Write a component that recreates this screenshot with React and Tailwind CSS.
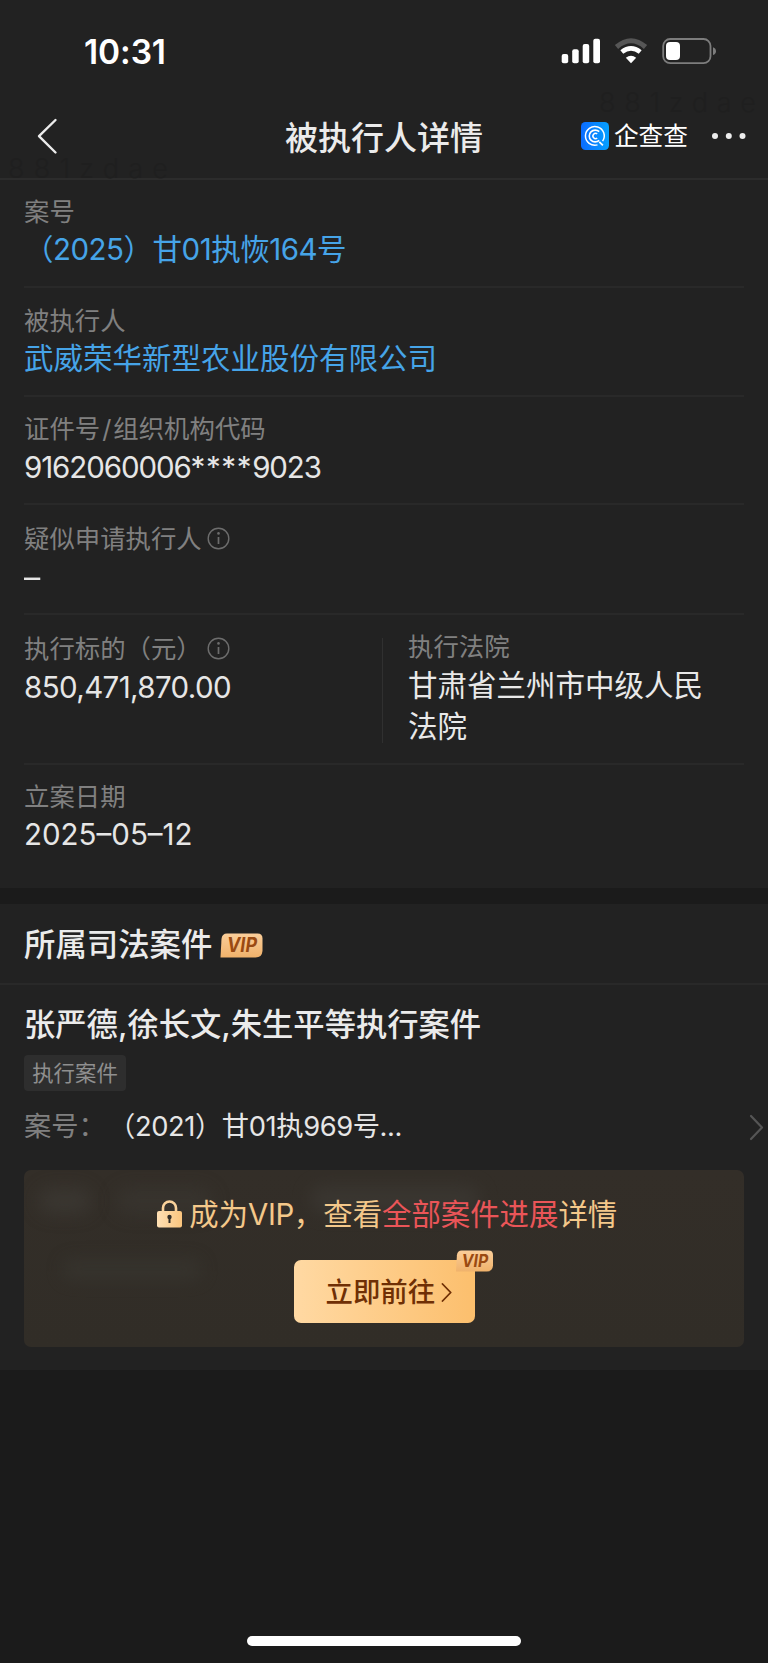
import React from "react";

const InfoIcon = () => (
  <svg className="size-[23px] shrink-0" viewBox="0 0 23 23" fill="none">
    <circle cx="11.5" cy="11.5" r="10.3" stroke="#6d6d6d" strokeWidth="1.4" />
    <path d="M11.5 10v7" stroke="#6d6d6d" strokeWidth="1.7" />
    <circle cx="11.5" cy="6.4" r="1.3" fill="#6d6d6d" />
  </svg>
);

const Label = ({ children, className = "" }) => (
  <div className={`flex h-[35px] items-center text-[25.4px] leading-[35px] whitespace-nowrap text-[#808080] ${className}`}>
    {children}
  </div>
);

const Value = ({ children, className = "text-[#e9e9e9]" }) => (
  <div className={`text-[29.5px] leading-[41px] ${className}`}>{children}</div>
);

const VipBadge = ({ className, id }) => (
  <svg className={className} viewBox="0 0 43 25">
    <defs>
      <linearGradient id={id} x1="0" y1="0" x2="0" y2="1">
        <stop offset="0" stopColor="#fbce9a" />
        <stop offset="1" stopColor="#f0b26b" />
      </linearGradient>
    </defs>
    <path d="M7 .5H37.5Q42.5 .5 42.5 5.5V18Q42 24.5 35.5 24.5H.5L1.5 6Q2 .5 7 .5Z" fill={`url(#${id})`} />
    <text x="22" y="19.2" textAnchor="middle" textLength="30" lengthAdjust="spacingAndGlyphs" fontFamily="Inter, sans-serif" fontWeight="700" fontStyle="italic" fontSize="19.5" fill="#9a4a12">
      VIP
    </text>
  </svg>
);

const StatusBar = () => (
  <div className="flex h-[100px] items-start justify-between pt-[32px] pr-[51px] pl-[84px]">
    <div className="text-[33.5px] leading-[40px] font-semibold tracking-[-0.1px] text-white">10:31</div>
    <svg className="mt-[4px] h-[30px] w-[157px]" viewBox="560 36 157 30" fill="none">
      <g fill="#fff">
        <rect x="561.7" y="54" width="6.5" height="9.2" rx="2" />
        <rect x="572.2" y="49.3" width="6.5" height="13.9" rx="2" />
        <rect x="582.7" y="44" width="6.5" height="19.2" rx="2" />
        <rect x="593.3" y="38.8" width="6.7" height="24.4" rx="2" />
      </g>
      <path d="M616.5 47Q631 34.5 645.5 47" stroke="#565656" strokeWidth="5" />
      <path d="M621.8 52Q631 44.8 640.2 52" stroke="#fff" strokeWidth="4.7" />
      <path d="M625.8 57.8Q631 53.6 636.2 57.8L631 63.2Z" fill="#fff" />
      <rect x="663.2" y="39" width="47.3" height="24.2" rx="7" stroke="#7d7d7d" strokeWidth="1.8" />
      <path d="M713 47.3Q716 48.5 716 51.2Q716 54 713 55Z" fill="#7d7d7d" />
      <rect x="666" y="42" width="14" height="18" rx="4" fill="#fff" />
    </svg>
  </div>
);

const NavBar = () => (
  <div className="grid h-[80px] grid-cols-[1fr_200px_1fr] items-start border-b-2 border-[#2c2c2c]">
    <svg className="mt-[17px] ml-[36px] h-[38px] w-[24px]" viewBox="0 0 24 38" fill="none">
      <path d="M19.5 3 3 19.2 19.5 35.5" stroke="#ececec" strokeWidth="2.4" strokeLinecap="round" strokeLinejoin="round" />
    </svg>
    <div className="mt-[14px] text-center text-[33px] leading-[48px] font-medium whitespace-nowrap text-[#ebebeb]">被执行人详情</div>
    <div className="mt-[22px] flex items-center justify-end pr-[21px]">
      <svg className="size-[28px]" viewBox="0 0 28 28" fill="none">
        <defs>
          <linearGradient id="logo" x1="0" y1="0" x2="1" y2="0">
            <stop offset="0" stopColor="#0b6cff" />
            <stop offset="1" stopColor="#05a0ff" />
          </linearGradient>
        </defs>
        <rect width="28" height="28" rx="4.5" fill="url(#logo)" />
        <g stroke="#fff">
          <path d="M16.5 22.9A9.4 9.4 0 1 1 21.6 19.2" strokeWidth="1.5" />
          <path d="M18.3 19.8 21.9 23.4" strokeWidth="1.7" />
          <path d="M18.2 9.7A5.9 5.9 0 1 0 18.2 18.3" strokeWidth="1.6" />
          <path d="M16.2 11.8A2.7 2.7 0 1 0 16.2 16.2" strokeWidth="1.5" />
        </g>
      </svg>
      <div className="ml-[5px] text-[24.7px] leading-[28px] font-normal whitespace-nowrap text-white">企查查</div>
      <svg className="ml-[23px] h-[8px] w-[36px]" viewBox="0 0 36 8" fill="#ededed">
        <circle cx="4" cy="4" r="3" />
        <circle cx="17.8" cy="4" r="3" />
        <circle cx="31.5" cy="4" r="3" />
      </svg>
    </div>
  </div>
);

export default function App() {
  return (
    <div className="relative flex h-[1663px] w-[768px] flex-col overflow-hidden bg-[#1b1b1b] font-['Inter','Noto_Sans_CJK_SC',sans-serif] font-[380]">
      <div className="bg-[#222222]">
        <StatusBar />
        <NavBar />
      </div>

      <div className="pointer-events-none absolute top-[83px] left-[599px] text-[27px] leading-[40px] font-light tracking-[8.7px] whitespace-nowrap text-[#1f1f1f]">881zdae</div>
      <div className="pointer-events-none absolute top-[149px] left-[8px] text-[27px] leading-[40px] font-light tracking-[9.2px] whitespace-nowrap text-[#1f1f1f]">881zdae</div>

      <section className="h-[708px] bg-[#222222] px-6">
        <div className="h-[108px] border-b-2 border-[#292929] pt-[14px]">
          <Label>案号</Label>
          <Value className="tracking-[-0.5px] text-[#46a4e8]">（2025）甘01执恢164号</Value>
        </div>
        <div className="h-[109px] border-b-2 border-[#292929] pt-[15px]">
          <Label>被执行人</Label>
          <Value className="text-[#46a4e8]">武威荣华新型农业股份有限公司</Value>
        </div>
        <div className="h-[108px] border-b-2 border-[#292929] pt-[14px]">
          <Label>证件号<span className="px-[2px]">/</span>组织机构代码</Label>
          <Value className="pt-[0.5px] tracking-[-1.1px] text-[#e6e6e6]">9162060006<span className="tracking-[0.6px]">****</span>9023</Value>
        </div>
        <div className="h-[110px] border-b-2 border-[#292929] pt-[16px]">
          <Label className="gap-[5px]">疑似申请执行人<InfoIcon /></Label>
          <Value className="pt-[1px] text-[#e6e6e6]"><span className="inline-block origin-left scale-x-110">–</span></Value>
        </div>
        <div className="flex h-[150px] border-b-2 border-[#292929]">
          <div className="w-[358px] pt-[16px]">
            <Label className="gap-[5px]">执行标的（元）<InfoIcon /></Label>
            <Value className="pt-[1px] tracking-[-0.6px] text-[#e6e6e6]">850,471,870.00</Value>
          </div>
          <div className="mt-[23px] h-[105px] w-px bg-[#303030]" />
          <div className="w-[330px] pt-[14px] pl-[25px]">
            <Label>执行法院</Label>
            <Value className="pt-[1px] text-[#e9e9e9]">甘肃省兰州市中级人民法院</Value>
          </div>
        </div>
        <div className="pt-[14px]">
          <Label>立案日期</Label>
          <Value className="text-[#e6e6e6]">2025–05–12</Value>
        </div>
      </section>

      <section className="mt-4 h-[466px] bg-[#222222]">
        <div className="flex h-[81px] items-center border-b-2 border-[#292929] px-6">
          <h2 className="mt-[2px] text-[31.4px] leading-[48px] font-medium text-[#ebebeb]">所属司法案件</h2>
          <VipBadge id="vipA" className="mt-[3px] ml-[8px] h-[25px] w-[43px]" />
        </div>
        <div className="px-6 pt-[17px]">
          <h3 className="text-[31.3px] leading-[46px] font-medium text-[#ebebeb]">张严德,徐长文,朱生平等执行案件</h3>
          <div className="mt-[7px] flex h-[36px] w-[102px] items-center justify-center rounded-[4px] bg-[#2e2e2e] text-[21.4px] leading-[36px] text-[#8f8f8f]">执行案件</div>
          <div className="mt-[16px] mr-[-21px] flex h-[40px] items-center justify-between text-[27.3px] leading-[40px] whitespace-nowrap">
            <div className="flex">
              <span className="w-[84px] text-[#808080]">案号：</span>
              <span className="tracking-[-0.4px] text-[#e6e6e6]">（2021）甘01执969号...</span>
            </div>
            <svg className="h-[28px] w-[16px]" viewBox="0 0 16 28" fill="none">
              <path d="M2 3 13 14.5 2 26" stroke="#555" strokeWidth="2.2" strokeLinecap="round" strokeLinejoin="round" />
            </svg>
          </div>
          <div className="relative mt-[23px] flex h-[177px] flex-col items-center overflow-hidden rounded-[7px] bg-[linear-gradient(180deg,#332e28,#312d27)]">
            <div className="absolute top-[18px] left-[14px] h-[26px] w-[54px] rounded-full bg-[#403d38] opacity-60 blur-[9px]" />
            <div className="absolute top-[18px] left-[92px] h-[26px] w-[96px] rounded-full bg-[#3d3a35] opacity-50 blur-[9px]" />
            <div className="absolute top-[16px] left-[286px] h-[26px] w-[170px] rounded-full bg-[#3f3c37] opacity-60 blur-[9px]" />
            <div className="absolute top-[88px] left-[38px] h-[22px] w-[140px] rounded-full bg-[#393731] opacity-60 blur-[8px]" />
            <div className="relative mt-[24px] flex h-[42px] items-center pl-[6px] text-[29.4px] leading-[42px] whitespace-nowrap text-[#f4c88a]">
              <svg className="mr-[7.5px] h-[28px] w-[25px] -translate-y-[1px]" viewBox="0 0 25 28" fill="none">
                <defs>
                  <linearGradient id="lock" x1="0" y1="0" x2="1" y2="0">
                    <stop offset="0" stopColor="#ffe0b4" />
                    <stop offset="1" stopColor="#fbc57e" />
                  </linearGradient>
                </defs>
                <path d="M6 12V8A6.5 6.5 0 0 1 19 8V12" stroke="#fad29b" strokeWidth="2.6" />
                <rect x="0" y="11" width="25" height="16.5" rx="2" fill="url(#lock)" />
                <path d="M12.5 17v6" stroke="#332e28" strokeWidth="2" />
                <circle cx="12.5" cy="17" r="2.2" fill="#332e28" />
              </svg>
              <span>成为<span className="tracking-[-0.4px]">VIP</span>，查看</span>
              <span className="text-[#ea5558]">全部案件进展</span>
              <span>详情</span>
            </div>
            <div className="relative mt-[24px] flex h-[63px] w-[181px] items-center rounded-[7px] bg-[linear-gradient(90deg,#ffd9a3,#fcbf6d)] pl-[32px] text-[27.4px] leading-[40px] font-medium whitespace-nowrap text-[#6f2f05]">
              立即前往
              <svg className="ml-[6px] h-[20px] w-[12px]" viewBox="0 0 12 20" fill="none">
                <path d="M1.5 2 9.7 10.5 1.5 19" stroke="#6f2f05" strokeWidth="1.8" strokeLinecap="round" strokeLinejoin="round" />
              </svg>
              <VipBadge id="vipB" className="absolute top-[-10px] left-[161px] h-[22px] w-[39px]" />
            </div>
          </div>
        </div>
      </section>

      <div className="mt-auto mb-[17px] ml-[247px] h-[10px] w-[274px] rounded-full bg-white" />
    </div>
  );
}
